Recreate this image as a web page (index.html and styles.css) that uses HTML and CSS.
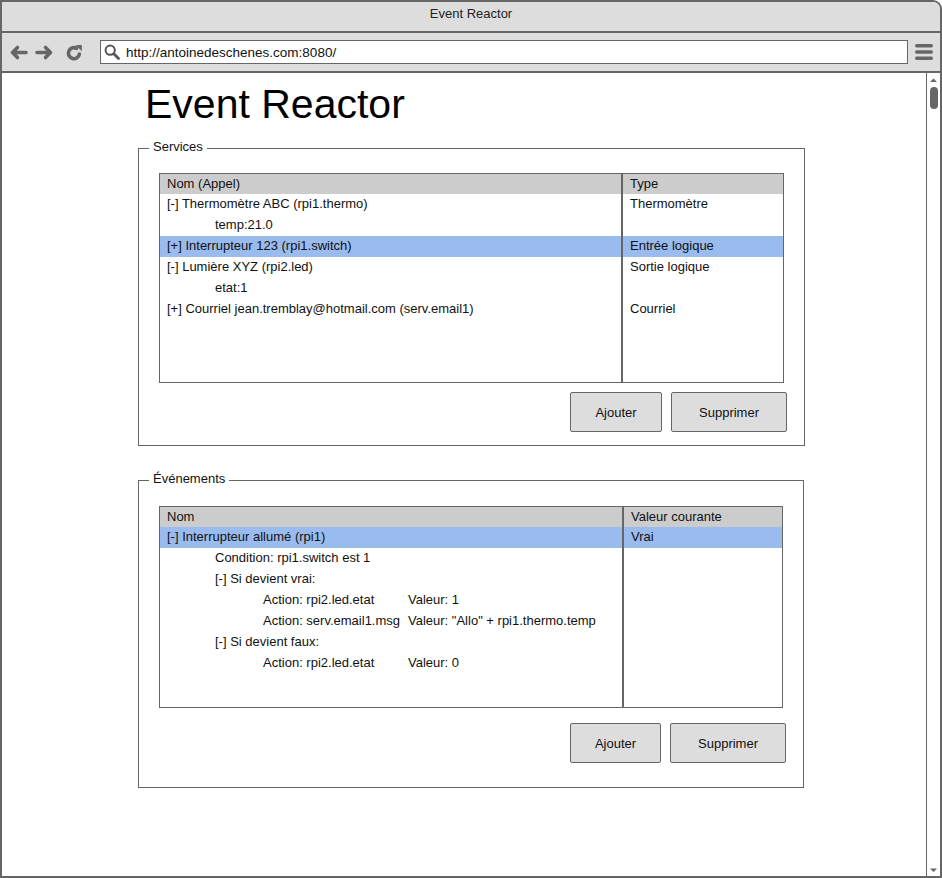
FILE: index.html
```html
<!DOCTYPE html>
<html lang="fr">
<head>
<meta charset="utf-8">
<title>Event Reactor</title>
<link rel="stylesheet" href="styles.css">
</head>
<body>
<div class="window">
  <div class="titlebar">Event Reactor</div>
  <div class="toolbar">
    <svg class="nav" width="98" height="38" viewBox="0 0 98 38">
      <g fill="none" stroke="#666" stroke-width="3.6" stroke-linecap="round" stroke-linejoin="round">
        <path d="M11 19.5 H24 M15.5 14.5 L10.5 19.5 L15.5 24.5"/>
        <path d="M35 19.5 H48 M43.5 14.5 L48.5 19.5 L43.5 24.5"/>
        <path d="M74.5 15.3 A5.5 5.5 0 1 0 77.4 21"/>
      </g>
      <polygon points="73.5,12 79.8,12 79.8,18.3" fill="#666"/>
    </svg>
    <div class="url">
      <svg class="search" width="16" height="16" viewBox="0 0 16 16">
        <circle cx="6.2" cy="6.2" r="4.6" fill="none" stroke="#555" stroke-width="2"/>
        <path d="M9.8 9.8 L14.5 14.5" stroke="#555" stroke-width="2.8" stroke-linecap="round"/>
      </svg>
      <span class="url-text">http://antoinedeschenes.com:8080/</span>
    </div>
    <svg class="menu" width="18" height="16" viewBox="0 0 18 16">
      <rect x="0" y="0" width="18" height="3.4" rx="1.7" fill="#666"/>
      <rect x="0" y="6.3" width="18" height="3.4" rx="1.7" fill="#666"/>
      <rect x="0" y="12.6" width="18" height="3.4" rx="1.7" fill="#666"/>
    </svg>
  </div>
  <div class="viewport">
    <main class="page">
      <h1 class="page-title">Event Reactor</h1>

      <fieldset class="group group-services">
        <legend class="group-legend">Services</legend>
        <div class="list list-services">
          <div class="row row-head"><div class="cell main">Nom (Appel)</div><div class="cell side">Type</div></div>
          <div class="row"><div class="cell main">[-] Thermomètre ABC (rpi1.thermo)</div><div class="cell side">Thermomètre</div></div>
          <div class="row"><div class="cell main lvl1">temp:21.0</div><div class="cell side"></div></div>
          <div class="row row-selected"><div class="cell main">[+] Interrupteur 123 (rpi1.switch)</div><div class="cell side">Entrée logique</div></div>
          <div class="row"><div class="cell main">[-] Lumière XYZ (rpi2.led)</div><div class="cell side">Sortie logique</div></div>
          <div class="row"><div class="cell main lvl1">etat:1</div><div class="cell side"></div></div>
          <div class="row"><div class="cell main">[+] Courriel jean.tremblay@hotmail.com (serv.email1)</div><div class="cell side">Courriel</div></div>
          <div class="row row-fill"><div class="cell main"></div><div class="cell side"></div></div>
        </div>
        <div class="actions">
          <button class="btn btn-add">Ajouter</button>
          <button class="btn btn-del">Supprimer</button>
        </div>
      </fieldset>

      <fieldset class="group group-events">
        <legend class="group-legend">Événements</legend>
        <div class="list list-events">
          <div class="row row-head"><div class="cell main">Nom</div><div class="cell side">Valeur courante</div></div>
          <div class="row row-selected"><div class="cell main">[-] Interrupteur allumé (rpi1)</div><div class="cell side">Vrai</div></div>
          <div class="row"><div class="cell main lvl1">Condition: rpi1.switch est 1</div><div class="cell side"></div></div>
          <div class="row"><div class="cell main lvl1">[-] Si devient vrai:</div><div class="cell side"></div></div>
          <div class="row"><div class="cell main lvl2"><span class="target">Action: rpi2.led.etat</span>Valeur: 1</div><div class="cell side"></div></div>
          <div class="row"><div class="cell main lvl2"><span class="target">Action: serv.email1.msg</span>Valeur: "Allo" + rpi1.thermo.temp</div><div class="cell side"></div></div>
          <div class="row"><div class="cell main lvl1">[-] Si devient faux:</div><div class="cell side"></div></div>
          <div class="row"><div class="cell main lvl2"><span class="target">Action: rpi2.led.etat</span>Valeur: 0</div><div class="cell side"></div></div>
          <div class="row row-fill"><div class="cell main"></div><div class="cell side"></div></div>
        </div>
        <div class="actions">
          <button class="btn btn-add">Ajouter</button>
          <button class="btn btn-del">Supprimer</button>
        </div>
      </fieldset>
    </main>
    <div class="scrollbar">
      <svg class="scroll-arrow" width="13" height="8" viewBox="0 0 13 8"><polygon points="3,7 10,7 6.5,3.5" fill="#666"/></svg>
      <div class="scroll-thumb"></div>
      <svg class="scroll-arrow scroll-arrow-down" width="13" height="9" viewBox="0 0 13 9"><polygon points="3,2.5 10,2.5 6.5,6" fill="#666"/></svg>
    </div>
  </div>
</div>
</body>
</html>
```

FILE: styles.css
```css
* { box-sizing: border-box; }

html, body {
  margin: 0;
  padding: 0;
  background: #fff;
}

body {
  font-family: "Liberation Sans", Arial, sans-serif;
  font-size: 13px;
  color: #111;
}

.window {
  width: 942px;
  height: 878px;
  border: 2px solid #666;
  border-top-right-radius: 9px;
  display: flex;
  flex-direction: column;
  overflow: hidden;
  background: #fff;
}

.titlebar {
  height: 31px;
  background: #ddd;
  border-bottom: 2px solid #666;
  text-align: center;
  padding-top: 4px;
  line-height: 15px;
  font-size: 13px;
  color: #222;
}

.toolbar {
  height: 40px;
  background: #ddd;
  border-bottom: 2px solid #666;
  display: flex;
  align-items: center;
  padding-right: 7px;
}

.nav {
  display: block;
  flex: none;
}

.url {
  flex: 1;
  height: 24px;
  border: 1px solid #666;
  background: #fff;
  display: flex;
  align-items: center;
  padding-left: 3px;
}

.search {
  display: block;
  flex: none;
}

.url-text {
  margin-left: 6px;
  font-size: 13.5px;
  color: #111;
}

.menu {
  display: block;
  flex: none;
  margin-left: 7px;
}

.viewport {
  flex: 1;
  display: flex;
  min-height: 0;
}

.page {
  flex: 1;
  padding-left: 136px;
}

.page-title {
  margin: 8px 0 0 7px;
  font-size: 41px;
  line-height: 46px;
  font-weight: normal;
  color: #000;
}

.group {
  margin: 12px 0 0 0;
  padding: 0;
  border: 1px solid #666;
  min-width: 0;
}

.group-services { width: 667px; }

.group-events {
  width: 666px;
  margin-top: 25px;
}

.group-legend {
  margin-left: 10px;
  padding: 0 4px 3px 4px;
  line-height: 15px;
  font-size: 13px;
}

.list {
  margin: 16px 20px 0 20px;
  border: 1px solid #666;
  display: flex;
  flex-direction: column;
}

.list-services { height: 210px; }

.list-events {
  height: 202px;
  margin-top: 17px;
}

.row {
  display: grid;
  grid-template-columns: 463px 1fr;
  height: 21px;
  line-height: 19px;
  flex: none;
}

.list-events .row { grid-template-columns: 464px 1fr; }

.row-head {
  height: 20px;
  line-height: 20px;
  background: #ccc;
}

.row-selected { background: #99bbee; }

.row-fill { flex: 1; height: auto; }

.cell {
  padding-left: 7px;
  white-space: nowrap;
}

.cell.main { border-right: 2px solid #666; }

.lvl1 { padding-left: 55px; }
.lvl2 { padding-left: 103px; }

.target {
  display: inline-block;
  width: 145px;
}

.actions {
  display: flex;
  justify-content: flex-end;
  gap: 9px;
  padding-right: 17px;
}

.group-services .actions {
  margin-top: 9px;
  padding-bottom: 13px;
}

.group-events .actions {
  margin-top: 15px;
  padding-bottom: 24px;
}

.btn {
  height: 40px;
  border: 1px solid #666;
  border-radius: 2px;
  background: #ddd;
  font-family: "Liberation Sans", Arial, sans-serif;
  font-size: 13px;
  color: #111;
  padding: 0;
}

.btn-add { width: 92px; }
.group-events .btn-add { width: 91px; }
.btn-del { width: 116px; }

.scrollbar {
  width: 14px;
  border-left: 1px solid #666;
  display: flex;
  flex-direction: column;
  align-items: flex-start;
}

.scroll-arrow {
  display: block;
  margin-top: 2px;
}

.scroll-thumb {
  width: 8px;
  height: 22px;
  border-radius: 4px;
  background: #666;
  margin: 4px 0 0 3px;
}

.scroll-arrow-down {
  margin-top: auto;
  margin-bottom: 1px;
}
```
